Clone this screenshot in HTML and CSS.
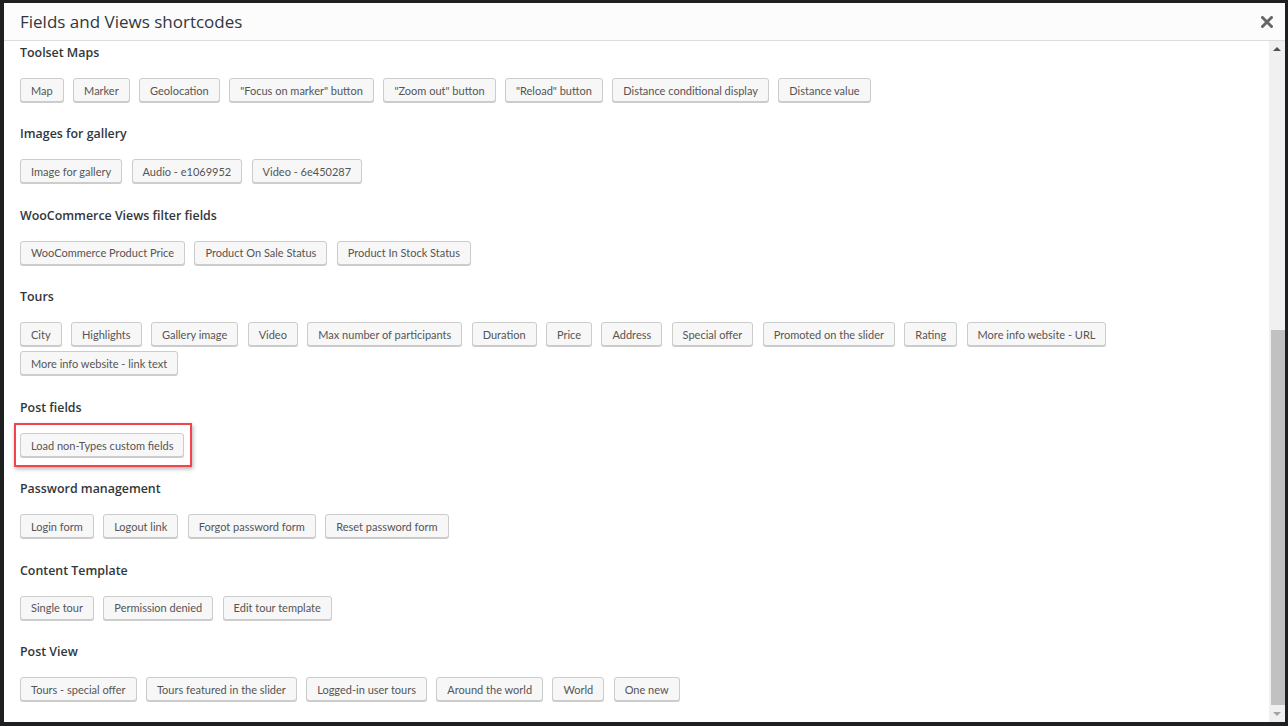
FILE: index.html
```html
<!DOCTYPE html>
<html lang="en">
<head>
    <meta charset="UTF-8">
    <title>Fields and Views shortcodes</title>
    <link rel="stylesheet" href="styles.css">
</head>
<body>

    <div class="dialog">
        <!-- Title bar -->
        <div class="dialog-header">
            <h1>Fields and Views shortcodes</h1>
            <svg class="close" width="12" height="12" viewBox="0 0 12 12">
                <path d="M1.5 1.5 L10.5 10.5 M10.5 1.5 L1.5 10.5" stroke="#666" stroke-width="3" stroke-linecap="round"/>
            </svg>
        </div>

        <div class="dialog-body">
            <div class="content">

                <div class="group">
                    <h3>Toolset Maps</h3>
                    <div class="buttons">
                        <button>Map</button>
                        <button>Marker</button>
                        <button>Geolocation</button>
                        <button>"Focus on marker" button</button>
                        <button>"Zoom out" button</button>
                        <button>"Reload" button</button>
                        <button>Distance conditional display</button>
                        <button>Distance value</button>
                    </div>
                </div>

                <div class="group">
                    <h3>Images for gallery</h3>
                    <div class="buttons">
                        <button>Image for gallery</button>
                        <button>Audio - e1069952</button>
                        <button>Video - 6e450287</button>
                    </div>
                </div>

                <div class="group">
                    <h3>WooCommerce Views filter fields</h3>
                    <div class="buttons">
                        <button>WooCommerce Product Price</button>
                        <button>Product On Sale Status</button>
                        <button>Product In Stock Status</button>
                    </div>
                </div>

                <div class="group">
                    <h3>Tours</h3>
                    <div class="buttons">
                        <button>City</button>
                        <button>Highlights</button>
                        <button>Gallery image</button>
                        <button>Video</button>
                        <button>Max number of participants</button>
                        <button>Duration</button>
                        <button>Price</button>
                        <button>Address</button>
                        <button>Special offer</button>
                        <button>Promoted on the slider</button>
                        <button>Rating</button>
                        <button>More info website - URL</button>
                        <button>More info website - link text</button>
                    </div>
                </div>

                <div class="group">
                    <h3>Post fields</h3>
                    <div class="buttons">
                        <span class="highlight"><button>Load non-Types custom fields</button></span>
                    </div>
                </div>

                <div class="group">
                    <h3>Password management</h3>
                    <div class="buttons">
                        <button>Login form</button>
                        <button>Logout link</button>
                        <button>Forgot password form</button>
                        <button>Reset password form</button>
                    </div>
                </div>

                <div class="group">
                    <h3>Content Template</h3>
                    <div class="buttons">
                        <button>Single tour</button>
                        <button>Permission denied</button>
                        <button>Edit tour template</button>
                    </div>
                </div>

                <div class="group">
                    <h3>Post View</h3>
                    <div class="buttons">
                        <button>Tours - special offer</button>
                        <button>Tours featured in the slider</button>
                        <button>Logged-in user tours</button>
                        <button>Around the world</button>
                        <button>World</button>
                        <button>One new</button>
                    </div>
                </div>

            </div>

            <!-- fake scrollbar, content is scrolled to the bottom -->
            <div class="scrollbar">
                <div class="arrow up"></div>
                <div class="track"><div class="thumb"></div></div>
                <div class="arrow down"></div>
            </div>
        </div>
    </div>

</body>
</html>
```

FILE: styles.css
```css
body {
    margin: 0;
    background: #1d1f21;
    font-family: "Open Sans", sans-serif;
    height: 726px;
    overflow: hidden;
}

.dialog {
    margin: 3px 3px 0 4px;
    height: 719px;
    background: #fff;
    display: flex;
    flex-direction: column;
}

.dialog-header {
    height: 37px;
    background: #fcfcfc;
    border-bottom: 1px solid #dddddd;
    display: flex;
    align-items: center;
    justify-content: space-between;
    padding: 0 12px 0 16px;
}

.dialog-header h1 {
    margin: 0;
    font-size: 17px;
    font-weight: 400;
    color: #32373c;
}

.close {
    margin-top: 1px;
}

.dialog-body {
    flex: 1;
    display: flex;
    overflow: hidden;
}

.content {
    flex: 1;
    padding: 2px 16px 0 16px;
}

.group h3 {
    margin: 0;
    font-size: 12.4px;
    line-height: 20px;
    font-weight: 600;
    color: #32373c;
}

.buttons {
    display: flex;
    flex-wrap: wrap;
    gap: 5px 9.4px;
    margin: 15px 0 22.4px 0;
}

button {
    font-family: "Lato", sans-serif;
    font-size: 11px;
    color: #555;
    height: 24px;
    padding: 0 10px;
    background: #f7f7f7;
    border: 1px solid #cccccc;
    border-radius: 3px;
    box-shadow: 0 1px 0 #cccccc;
}

.highlight {
    display: inline-block;
    margin: -10px -8px -10px -6px;
    padding: 8px 6px 8px 4px;
    border: 2px solid #f2444c;
    box-shadow: 1px 2px 4px rgba(0, 0, 0, 0.3);
}

.scrollbar {
    width: 16px;
    background: #f0f0f0;
    display: flex;
    flex-direction: column;
}

.arrow {
    height: 17px;
    position: relative;
}

.arrow.up::after,
.arrow.down::after {
    content: "";
    position: absolute;
    left: 4px;
    top: 6px;
    border-left: 4px solid transparent;
    border-right: 4px solid transparent;
}

.arrow.up::after {
    border-bottom: 4px solid #505050;
}

.arrow.down::after {
    top: 7px;
    border-top: 4px solid #a3a3a3;
}

.track {
    flex: 1;
    display: flex;
    flex-direction: column;
}

.thumb {
    margin-top: auto;
    height: 375px;
    margin-left: 2px;
    background: #c1c1c1;
}
```
